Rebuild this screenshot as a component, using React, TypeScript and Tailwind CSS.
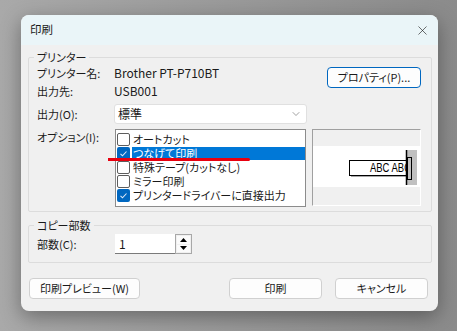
import { ChevronDown, X } from "lucide-react";
import React from "react";

const options = [
  { label: "オートカット", checked: false, selected: false },
  { label: "つなげて印刷", checked: true, selected: true },
  { label: "特殊テープ(カットなし)", checked: false, selected: false },
  { label: "ミラー印刷", checked: false, selected: false },
  { label: "プリンタードライバーに直接出力", checked: true, selected: false },
];

const btn =
  "h-[21px] rounded-[4px] border border-[#d0d0d0] bg-[#fdfdfd] leading-none text-[#1a1a1a] flex items-center justify-center whitespace-nowrap";

const CheckBox = ({ checked }: { checked: boolean }) =>
  checked ? (
    <span className="flex h-[13px] w-[13px] shrink-0 items-center justify-center rounded-[2px] bg-[#0067c0]">
      <svg width="9" height="9" viewBox="0 0 9 9" fill="none">
        <path d="M1.5 4.8l2 2 4-4.3" stroke="#dfe9f5" strokeWidth="1.1" />
      </svg>
    </span>
  ) : (
    <span className="h-[13px] w-[13px] shrink-0 rounded-[2px] border border-[#5d5d5d] bg-white" />
  );

const App: React.FC = () => {
  return (
    <div className="h-[331px] w-[457px] overflow-hidden bg-linear-to-r from-[#a9a9a9] to-[#8b8b8b] pl-[21px] pt-[15px] font-['Noto_Sans_CJK_JP','Noto_Sans',sans-serif] text-[11px] text-[#1a1a1a] [font-feature-settings:'palt']">
      <div className="flex h-[296px] w-[417px] flex-col overflow-hidden rounded-[8px] bg-[#f0f0f0] shadow-[0_6px_20px_rgba(0,0,0,0.35)]">
        {/* Title bar */}
        <div className="flex h-[30px] shrink-0 items-center justify-between bg-[#eaf5f8] pl-[9px] pr-[8px]">
          <span className="text-[11.5px] leading-none">印刷</span>
          <X size={15} strokeWidth={1} className="text-[#1a1a1a]" />
        </div>

        <div className="relative flex-1 pl-[7px] pt-[5px]">
          {/* Printer group */}
          <fieldset className="w-[404px] rounded-[2px] border border-[#dcdcdc] pb-[4px] pl-[5px] pr-[10px]">
            <legend className="px-[3px] leading-[14px]">プリンター</legend>
            <div className="pl-[3px]">
              <div className="grid grid-cols-[77px_1fr_94px] grid-rows-[18px_18px]">
                <span className="whitespace-nowrap leading-[18px]">プリンター名:</span>
                <span className="text-[12px] leading-[18px]">Brother PT-P710BT</span>
                <button className="row-span-2 mt-[3px] flex h-[21px] items-center justify-center rounded-[4px] border border-[#0067c0] bg-[#fdfdfd] leading-none">
                  プロパティ(P)...
                </button>
                <span className="leading-[18px]">出力先:</span>
                <span className="text-[12px] leading-[18px]">USB001</span>
              </div>

              <div className="mt-[4px] flex h-[20px] items-center">
                <span className="w-[77px]">出力(O):</span>
                <div className="flex h-[20px] w-[193px] items-center justify-between rounded-[3px] border border-[#e0e0e0] bg-white pl-[3px] pr-[4px]">
                  <span className="text-[12px] leading-none">標準</span>
                  <ChevronDown size={12} strokeWidth={1.2} className="text-[#606060]" />
                </div>
              </div>

              <div className="flex items-start">
                <span className="mt-[4px] w-[78px] whitespace-nowrap leading-[18px]">オプション(I):</span>
                <div className="mt-[5px] h-[78px] w-[191px] border border-[#8c8c8c] bg-white pt-[2px]">
                  {options.map((o) => (
                    <div key={o.label} className="flex h-[14px] items-center pl-[1px]">
                      <CheckBox checked={o.checked} />
                      <span
                        className={
                          o.selected
                            ? "ml-[2px] flex h-[13px] flex-1 items-center whitespace-nowrap bg-[#0078d7] pl-[1px] leading-[13px] text-white"
                            : "ml-[2px] flex h-[13px] items-center whitespace-nowrap pl-[1px] leading-[13px]"
                        }
                      >
                        {o.label}
                      </span>
                    </div>
                  ))}
                </div>
                <div className="ml-[6px] mt-[5px] flex h-[77px] w-[109px] flex-col border-b border-l border-r border-t border-b-white border-l-[#a0a0a0] border-r-white border-t-[#a0a0a0]">
                  <div className="h-[16px] bg-[#f0f0f0]" />
                  <div className="h-[41px] bg-white">
                    <svg width="108" height="41" viewBox="0 0 108 41">
                      <defs>
                        <clipPath id="lbl">
                          <rect x="36" y="14" width="58" height="16" />
                        </clipPath>
                      </defs>
                      <rect x="38" y="16" width="58" height="15" fill="#a8a8a8" />
                      <rect x="36.5" y="14.5" width="57" height="15" fill="#fff" stroke="#000" />
                      <text
                        x="57"
                        y="26"
                        clipPath="url(#lbl)"
                        fontFamily="'Liberation Sans', sans-serif"
                        fontSize="13.5"
                        textLength="41"
                        lengthAdjust="spacingAndGlyphs"
                        fill="#000"
                      >
                        ABC ABC
                      </text>
                      <rect x="94" y="4" width="10" height="35" fill="#c0c0c0" />
                      <rect x="94.5" y="11.5" width="4" height="22" fill="#c0c0c0" stroke="#000" />
                      <line x1="93.5" y1="4" x2="93.5" y2="39" stroke="#000" strokeWidth="1.5" />
                    </svg>
                  </div>
                  <div className="flex-1 bg-[#f0f0f0]" />
                </div>
              </div>
            </div>
          </fieldset>

          {/* Copies group */}
          <fieldset className="mt-[6px] w-[404px] rounded-[2px] border border-[#dcdcdc] pb-[8px] pl-[5px] pr-[10px]">
            <legend className="px-[3px] leading-[14px]">コピー部数</legend>
            <div className="mt-[2px] flex h-[20px] items-center pl-[3px]">
              <span className="w-[78px]">部数(C):</span>
              <div className="flex h-[20px] w-[60px] items-center border-b border-[#7a7a7a] bg-white pl-[4px] text-[12px] leading-none">
                1
              </div>
              <div className="flex h-[20px] w-[17px] flex-col gap-[1px] border border-[#a8a8a8] bg-[#f0f0f0] p-[1px]">
                <div className="flex flex-1 items-center justify-center bg-[#fbfbfb]">
                  <svg width="7" height="4" viewBox="0 0 7 4">
                    <path d="M0 4h7L3.5 0z" fill="#000" />
                  </svg>
                </div>
                <div className="flex flex-1 items-center justify-center bg-[#fbfbfb]">
                  <svg width="7" height="4" viewBox="0 0 7 4">
                    <path d="M0 0h7L3.5 4z" fill="#000" />
                  </svg>
                </div>
              </div>
            </div>
          </fieldset>

          {/* Buttons */}
          <div className="mt-[15px] flex pl-[1px] pr-[10px]">
            <button className={`${btn} w-[111px]`}>印刷プレビュー(W)</button>
            <button className={`${btn} ml-auto w-[93px]`}>印刷</button>
            <button className={`${btn} ml-[13px] w-[93px]`}>キャンセル</button>
          </div>

          {/* red annotation line */}
          <div className="absolute left-[87px] top-[113px] h-[3px] w-[142px] rounded-r-full bg-[#e8000f]" />
        </div>
      </div>
    </div>
  );
};

export default App;
